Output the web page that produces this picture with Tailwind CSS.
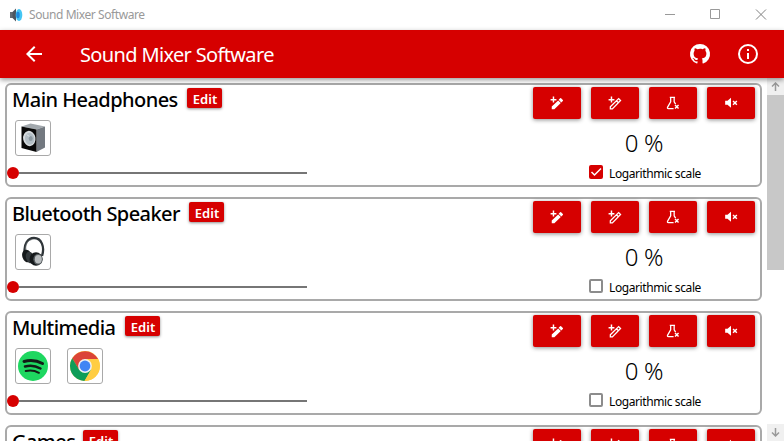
<!DOCTYPE html>
<html lang="en">
<head>
<meta charset="utf-8">
<title>Sound Mixer Software</title>
<script src="https://cdn.jsdelivr.net/npm/@tailwindcss/browser@4"></script>
</head>
<body class="h-[441px] w-[784px] overflow-hidden bg-white font-['Segoe_UI','Noto_Sans',sans-serif] text-black">
<svg class="hidden">
  <symbol id="wand" viewBox="0 0 24 24"><path d="M7.200 1v4H11v2.500H7.200V11H4.700V7.500H1V5h3.700V1zM3 18 14 7.500l4.500 4.500L7.500 22.500H3zM19.400 11l-4.600-4.600 2.600-2.600q.8-.8 1.600 0l3 3q.8.8 0 1.600z"/></symbol>
  <symbol id="wandOutline" viewBox="0 0 24 24"><path d="M7.200 1v4H11v2.500H7.200V11H4.700V7.500H1V5h3.700V1z"/><path d="M4 18.500 18.300 4.500l3.200 3.200L7.500 22H4zM14.500 8.200l3.300 3.300" fill="none" stroke="currentColor" stroke-width="2.200"/></symbol>
  <symbol id="flask" viewBox="0 0 24 24"><path d="M13 21.500H4.200Q1.500 21.500 3 18.700L8 10V3M14 3v7l2.500 4M6.500 2.500h9" fill="none" stroke="currentColor" stroke-width="2.200"/><path d="m15.500 15.500 6 6m0-6-6 6" fill="none" stroke="currentColor" stroke-width="2.500"/></symbol>
  <symbol id="mute" viewBox="0 0 24 24"><path d="M2 8v7h4l6 5V3L6 8z"/><path d="m15.500 8.500 6.500 6.500m0-6.500-6.500 6.500" fill="none" stroke="currentColor" stroke-width="2.500"/></symbol>
  <symbol id="speaker" viewBox="0 0 32 32">
    <path d="m4.500 4.500 9-3 14.500 3-8.500 3z" fill="#a2a8ad"/><path d="m19.500 7.500 8.500-3v21L19.500 30z" fill="#737980"/><path d="m4.500 4.500 15 3V30l-15-4z" fill="#080808"/>
    <ellipse cx="12.300" cy="16.500" rx="6.200" ry="7.700" fill="#d5d9dc" transform="rotate(-10 12.300 16.500)"/><ellipse cx="12.700" cy="16.700" rx="4.700" ry="6" fill="#b3bec5" transform="rotate(-10 12.700 16.700)"/><ellipse cx="13.700" cy="16.500" rx="2" ry="2.600" fill="#8d9aa2"/><path d="m10 12.500 2 2" stroke="#e8edf0"/>
  </symbol>
  <symbol id="phones" viewBox="0 0 32 32">
    <path d="M8 18C6 8 11 2 17 2c7.500 0 11 9 8 18" fill="none" stroke="#30363a" stroke-width="2.300"/><path d="M9 14C8 7 12 4 15 3.500" fill="none" stroke="#777d80" stroke-width=".7"/>
    <ellipse cx="10" cy="20" rx="4.700" ry="6.500" fill="#15191b" transform="rotate(-18 10 20)"/><ellipse cx="13" cy="21.500" rx="4" ry="6" fill="#33393c" transform="rotate(-18 13 21.500)"/>
    <ellipse cx="19" cy="23" rx="6.500" ry="6.800" fill="#15191b"/><ellipse cx="21" cy="23.300" rx="4.700" ry="5.500" fill="#555b5e"/><ellipse cx="21.300" cy="23.300" rx="3.500" ry="4.200" fill="#b9bdbf"/>
  </symbol>
  <symbol id="spotify" viewBox="0 0 32 32"><circle cx="16" cy="16" r="15" fill="#1ed760"/><g fill="none" stroke="#121c16" stroke-linecap="round"><path d="M7 11.500q10-2.500 18.500 2" stroke-width="3"/><path d="M8 16.500q8-2.300 15.500 2" stroke-width="2.500"/><path d="M8.700 21q7-1.700 13.200 1.800" stroke-width="2"/></g></symbol>
  <symbol id="chrome" viewBox="0 0 32 32"><circle cx="16" cy="16" r="15" fill="#ffcd42"/><path d="M3.200 8.200A15 15 0 0 1 29.100 9H16L9.800 19.500z" fill="#db4437"/><path d="M3.200 8.200A15 15 0 0 0 15.500 31l6.700-11.500H10z" fill="#0f9d58"/><path d="M29.100 9H16v7l6.200 3.500L15.500 31A15 15 0 0 0 29.100 9" fill="#ffcd42"/><circle cx="16" cy="16" r="6.900" fill="#f1f1f1"/><circle cx="16" cy="16" r="5.400" fill="#4285f4"/></symbol>
</svg>

<div class="flex h-[30px] items-center bg-white text-[#999]">
  <svg class="ml-[9px] size-[14px]" viewBox="0 0 14 14"><path d="M1 4h3v6H1z" fill="#636c74"/><path d="m3.500 4 3.500-3.500v13L3.500 10z" fill="#4c5660"/><ellipse cx="10" cy="7" rx="3.300" ry="6" fill="#45c6f4"/><ellipse cx="9" cy="7" rx="1.700" ry="3.300" fill="#1e88dc"/></svg>
  <span class="ml-[6px] text-[12px] tracking-[-0.42px] whitespace-nowrap">Sound Mixer Software</span>
  <svg class="ml-auto mr-[17px] h-[12px] w-[104px]" viewBox="0 0 104 12" fill="none" stroke="#999"><path d="M2 5.500h10M47.500 .5h9v9h-9z"/><path d="m93 .5 10 10m0-10-10 10" stroke="#808080"/></svg>
</div>

<header class="relative z-10 flex h-[48px] items-center bg-[#d60000] text-white shadow-[0_2px_5px_rgba(0,0,0,0.4)]">
  <svg class="ml-[22px] size-[24px]" viewBox="0 0 24 24" fill="currentColor"><path d="M20 11H7.830l5.590-5.590L12 4l-8 8 8 8 1.410-1.410L7.830 13H20z"/></svg>
  <h1 class="ml-[34px] pt-[2px] text-[20px] tracking-[-0.65px] whitespace-nowrap">Sound Mixer Software</h1>
  <svg class="ml-auto size-[24px]" viewBox="0 0 24 24" fill="currentColor"><path d="M12 2A10 10 0 0 0 8.840 21.500c.5.080.66-.23.66-.5v-1.690c-2.770.6-3.360-1.340-3.360-1.340-.46-1.160-1.110-1.470-1.110-1.470-.91-.62.070-.6.070-.6 1 .07 1.530 1.030 1.530 1.030.87 1.520 2.340 1.070 2.910.83.090-.65.350-1.090.63-1.340-2.220-.25-4.550-1.110-4.550-4.920 0-1.110.38-2 1.030-2.710-.1-.25-.45-1.290.1-2.640 0 0 .84-.27 2.750 1.020A9.600 9.600 0 0 1 12 6.840c.85.004 1.710.11 2.500.33 1.910-1.290 2.750-1.020 2.750-1.020.55 1.350.2 2.390.1 2.640.65.710 1.030 1.600 1.030 2.710 0 3.820-2.340 4.660-4.570 4.910.36.310.69.920.69 1.850V21c0 .27.160.59.67.5A10 10 0 0 0 12 2"/></svg>
  <svg class="mr-[24px] ml-[24px] size-[24px]" viewBox="0 0 24 24" fill="currentColor"><path d="M11 7h2v2h-2zm0 4h2v6h-2zm1-9a10 10 0 1 0 0 20 10 10 0 0 0 0-20m0 18a8 8 0 1 1 0-16 8 8 0 0 1 0 16"/></svg>
</header>

<div class="flex h-[363px]">
  <main id="sliders" class="flex w-[767px] flex-col gap-[10px] overflow-hidden pt-[5px] pr-[5px] pl-[5px]"></main>
  <aside class="flex w-[17px] flex-col bg-white">
    <div class="grid h-[17px] place-items-center bg-[#f0f0f0]"><svg class="size-[9px]" viewBox="0 0 9 9" fill="none" stroke="#999" stroke-width="1.500"><path d="M4.500 9V1M1 4.500 4.500 1 8 4.500"/></svg></div>
    <div class="h-[175px] bg-[#c8c8c8]"></div>
    <div class="mt-auto grid h-[17px] place-items-center bg-[#f0f0f0]"><svg class="size-[9px]" viewBox="0 0 9 9" fill="none" stroke="#999" stroke-width="1.500"><path d="M4.500 0v8M1 4.500 4.500 8 8 4.500"/></svg></div>
  </aside>
</div>

<script>
const groups = [
  { name: 'Main Headphones', width: 166, apps: ['speaker'], log: true },
  { name: 'Bluetooth Speaker', width: 168, apps: ['phones'] },
  { name: 'Multimedia', width: 104, apps: ['spotify', 'chrome'] },
  { name: 'Games', width: 62, apps: [] },
];
const checkbox = on => on
  ? '<span class="grid size-[14px] shrink-0 place-items-center rounded-[2px] bg-[#d60000]"><svg class="size-[12px]" viewBox="0 0 12 12" fill="none" stroke="white" stroke-width="1.500"><path d="m1.500 6 3 3L11 2.500"/></svg></span>'
  : '<span class="size-[14px] shrink-0 rounded-[2px] border-2 border-[#8c8c8c]"></span>';
document.getElementById('sliders').innerHTML = groups.map(g => `
  <section class="flex h-[104px] shrink-0 justify-between rounded-[6px] border-2 border-[#a9a9a9] bg-white">
    <div class="flex w-[302px] flex-col">
      <div class="flex h-[33px] items-start pl-[5px]">
        <h2 class="h-[30px] text-[20px] leading-[30px] font-medium tracking-[-0.56px] whitespace-nowrap" style="width:${g.width}px">${g.name}</h2>
        <button class="mt-[3px] ml-[9px] h-[20px] w-[35px] rounded-[2px] bg-[#d60000] pt-px pl-px text-[13px] leading-[21px] font-semibold text-white shadow-[0_1px_3px_rgba(0,0,0,0.45)]">Edit</button>
      </div>
      <div class="mt-[2px] flex h-[36px] gap-[16px] pl-[8px]">${g.apps.map(a => `<span class="grid size-[36px] place-items-center rounded-[3px] border border-[#a9a9a9]"><svg class="size-[32px]"><use href="#${a}"/></svg></span>`).join('')}</div>
      <div class="mt-[11px] flex h-[12px] w-[300px] items-center"><span class="size-[12px] rounded-full bg-[#d60000]"></span><span class="h-[2px] grow bg-[#767676]"></span></div>
    </div>
    <div class="flex w-[227px] flex-col items-center pt-[2px] pr-[5px]">
      <div class="flex gap-[10px]">${['wand', 'wandOutline', 'flask', 'mute'].map(i => `<button class="grid h-[32px] w-[48px] place-items-center rounded-[2px] bg-[#d60000] text-white shadow-[0_1px_4px_rgba(0,0,0,0.45)]"><svg class="size-[14px]" fill="currentColor"><use href="#${i}"/></svg></button>`).join('')}</div>
      <div class="mt-[8px] h-[32px] text-[24px] leading-[32px] font-light tracking-[-0.3px]">0 %</div>
      <label class="mt-[6px] ml-[2px] flex h-[14px] w-[112px] items-center gap-[6px] text-[12px] leading-[14px] tracking-[-0.4px] whitespace-nowrap">${checkbox(g.log)}<span class="pt-[3px]">Logarithmic scale</span></label>
    </div>
  </section>`).join('');
</script>
</body>
</html>
